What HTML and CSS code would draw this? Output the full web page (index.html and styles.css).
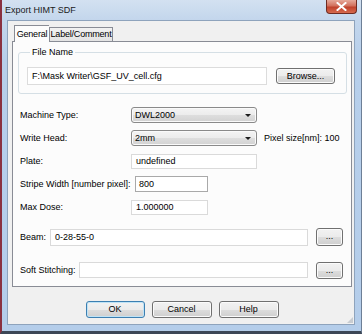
FILE: index.html
```html
<!DOCTYPE html>
<html lang="en">
<head>
    <meta charset="UTF-8">
    <title>Export HIMT SDF</title>
    <link rel="stylesheet" href="styles.css">
</head>
<body>

    <!-- Dialog window -->
    <div class="window">
        <div class="titlebar">
            <span class="title">Export HIMT SDF</span>
            <div class="close">
                <svg width="11" height="9" viewBox="0 0 11 9">
                    <path d="M1.5 1 L9.5 8 M9.5 1 L1.5 8" stroke="#fff" stroke-width="2" stroke-linecap="square"/>
                </svg>
            </div>
        </div>

        <div class="client">
            <div class="tabs">
                <div class="tab active">General</div>
                <div class="tab">Label/Comment</div>
            </div>

            <div class="panel">
                <fieldset class="group">
                    <legend>File Name</legend>
                    <div class="file-row">
                        <div class="field path">F:\Mask Writer\GSF_UV_cell.cfg</div>
                        <div class="btn browse">Browse...</div>
                    </div>
                </fieldset>

                <div class="form">
                    <span class="label">Machine Type:</span>
                    <div class="ctrl">
                        <div class="combo">DWL2000<i class="arrow"></i></div>
                    </div>

                    <span class="label">Write Head:</span>
                    <div class="ctrl">
                        <div class="combo">2mm<i class="arrow"></i></div>
                        <span class="note">Pixel size[nm]: 100</span>
                    </div>

                    <span class="label">Plate:</span>
                    <div class="ctrl">
                        <div class="field plate">undefined</div>
                    </div>

                    <span class="label">Stripe Width [number pixel]:</span>
                    <div class="ctrl">
                        <div class="field stripe">800</div>
                    </div>

                    <span class="label">Max Dose:</span>
                    <div class="ctrl">
                        <div class="field dose">1.000000</div>
                    </div>
                </div>

                <div class="line-row beam">
                    <span class="label">Beam:</span>
                    <div class="field wide">0-28-55-0</div>
                    <div class="btn dots">...</div>
                </div>

                <div class="line-row soft">
                    <span class="label">Soft Stitching:</span>
                    <div class="field wide"></div>
                    <div class="btn dots">...</div>
                </div>
            </div>

            <div class="actions">
                <div class="btn default">OK</div>
                <div class="btn">Cancel</div>
                <div class="btn">Help</div>
            </div>

            <div class="grip"></div>
        </div>
    </div>

</body>
</html>
```

FILE: styles.css
```css
* {
    margin: 0;
    padding: 0;
    box-sizing: border-box;
    font-family: "Liberation Sans", Arial, sans-serif;
}

body {
    width: 362px;
    height: 334px;
    overflow: hidden;
    background: #2f3a46;
}

/* Aero style frame */
.window {
    width: 362px;
    height: 334px;
    display: flex;
    flex-direction: column;
    background: linear-gradient(180deg, #d3e1f1 0px, #c3d6ec 20px, #b7cfeb 60px, #b4cdea 100%);
    border-left: 2px solid #8a3140;
    border-right: 1px solid #6d7f96;
    border-bottom: 3px solid #3c4756;
}

.titlebar {
    height: 20px;
    display: flex;
    align-items: flex-start;
    flex-shrink: 0;
}

.title {
    font-size: 9px;
    color: #1a1a1a;
    padding: 5px 0 0 3px;
}

.close {
    margin-left: auto;
    margin-right: 4px;
    width: 31px;
    height: 14px;
    display: flex;
    align-items: center;
    justify-content: center;
    background: linear-gradient(180deg, #e6a99a 0%, #d2705c 45%, #c0422c 55%, #d66a4e 100%);
    border: 1px solid #6e2b22;
    border-top: none;
    border-radius: 0 0 4px 4px;
}

/* Client area */
.client {
    position: relative;
    flex: 1;
    margin: 0 6px 6px 5px;
    background: #f0f0f0;
    border: 1px solid #8ea3bc;
    display: flex;
    flex-direction: column;
}

.tabs {
    height: 20px;
    display: flex;
    align-items: flex-end;
    margin-left: 6px;
    position: relative;
    z-index: 1;
}

.tab {
    font-size: 9px;
    height: 14px;
    width: 64px;
    line-height: 12px;
    text-align: center;
    letter-spacing: -0.2px;
    white-space: nowrap;
    border: 1px solid #898c95;
    border-bottom: none;
    background: linear-gradient(180deg, #f2f2f2, #e3e3e3);
    color: #000;
}

.tab.active {
    height: 17px;
    width: 35px;
    padding-top: 2px;
    background: #fcfcfc;
    margin-bottom: -1px;
    border-right: none;
}

.panel {
    margin: 0 2px 0 4px;
    height: 246px;
    background: #fcfcfc;
    border: 1px solid #898c95;
    display: flex;
    flex-direction: column;
}

/* File name group */
.group {
    margin: 4px 4px 0 5px;
    border: 1px solid #d5dfe5;
    border-radius: 3px;
    padding: 9px 11px 8px 8px;
}

.group legend {
    font-size: 9px;
    line-height: 12px;
    padding: 0 2px;
    margin-left: 3px;
    color: #000;
}

.file-row {
    display: flex;
    align-items: center;
    gap: 9px;
}

.field {
    font-size: 9px;
    height: 16px;
    line-height: 14px;
    padding: 0 4px;
    background: #fff;
    border: 1px solid #dadada;
    color: #000;
}

.field.path {
    width: 240px;
    height: 18px;
    line-height: 16px;
    border-color: #dcdcdc;
}

.btn {
    font-size: 9px;
    height: 17px;
    width: 60px;
    line-height: 15px;
    text-align: center;
    color: #000;
    border: 1px solid #707070;
    border-radius: 3px;
    background: linear-gradient(180deg, #f2f2f2 0%, #ebebeb 50%, #dddddd 51%, #cfcfcf 100%);
    box-shadow: inset 0 0 0 1px #fbfbfb;
}

.btn.browse {
    width: 59px;
    height: 16px;
    line-height: 14px;
}

/* Settings grid */
.form {
    display: grid;
    grid-template-columns: 111px 1fr;
    grid-auto-rows: 16px;
    row-gap: 7px;
    margin: 13px 0 0 7px;
    align-items: center;
}

.label {
    font-size: 9px;
    color: #000;
    white-space: nowrap;
}

.ctrl {
    display: flex;
    align-items: center;
    gap: 7px;
    height: 16px;
}

.combo {
    position: relative;
    font-size: 9px;
    width: 126px;
    height: 16px;
    line-height: 14px;
    padding-left: 3px;
    border: 1px solid #8a8a8a;
    border-radius: 3px;
    background: linear-gradient(180deg, #f4f4f4 0%, #ececec 50%, #dedede 51%, #d2d2d2 100%);
    box-shadow: inset 0 0 0 1px #fafafa;
}

.combo .arrow {
    position: absolute;
    right: 5px;
    top: 6px;
    border-left: 3px solid transparent;
    border-right: 3px solid transparent;
    border-top: 3px solid #1c1c1c;
}

.note {
    font-size: 9px;
    color: #000;
}

.field.plate {
    width: 126px;
    height: 15px;
    line-height: 13px;
}

.field.stripe {
    width: 73px;
    margin-left: 4px;
    border-color: #a9a9a9;
    padding-left: 3px;
}

.field.dose {
    width: 77px;
    height: 15px;
    line-height: 13px;
}

/* Beam / soft stitching rows */
.line-row {
    display: flex;
    align-items: center;
    margin-left: 7px;
    height: 18px;
}

.line-row .field.wide {
    height: 17px;
    line-height: 15px;
    width: 258px;
}

.beam {
    margin-top: 13px;
}

.beam .label {
    width: 30px;
}

.soft {
    margin-top: 15px;
}

.soft .label {
    width: 59px;
}

.soft .field.wide {
    width: 229px;
    height: 16px;
}

.btn.dots {
    width: 27px;
    height: 18px;
    margin-left: 8px;
    line-height: 14px;
}

.soft .btn.dots {
    height: 17px;
}

/* Bottom buttons */
.actions {
    display: flex;
    justify-content: center;
    gap: 7px;
    margin-top: 14px;
    padding-left: 2px;
}

.btn.default {
    width: 59px;
    border-color: #3c7fb1;
    box-shadow: inset 0 0 0 1px #bfe3f6;
}

.grip {
    position: absolute;
    right: 1px;
    bottom: 1px;
    width: 6px;
    height: 6px;
    background: radial-gradient(circle, #9aa3ad 0.6px, transparent 0.8px) 0 0 / 2px 2px;
    clip-path: polygon(100% 0, 100% 100%, 0 100%);
}
```
